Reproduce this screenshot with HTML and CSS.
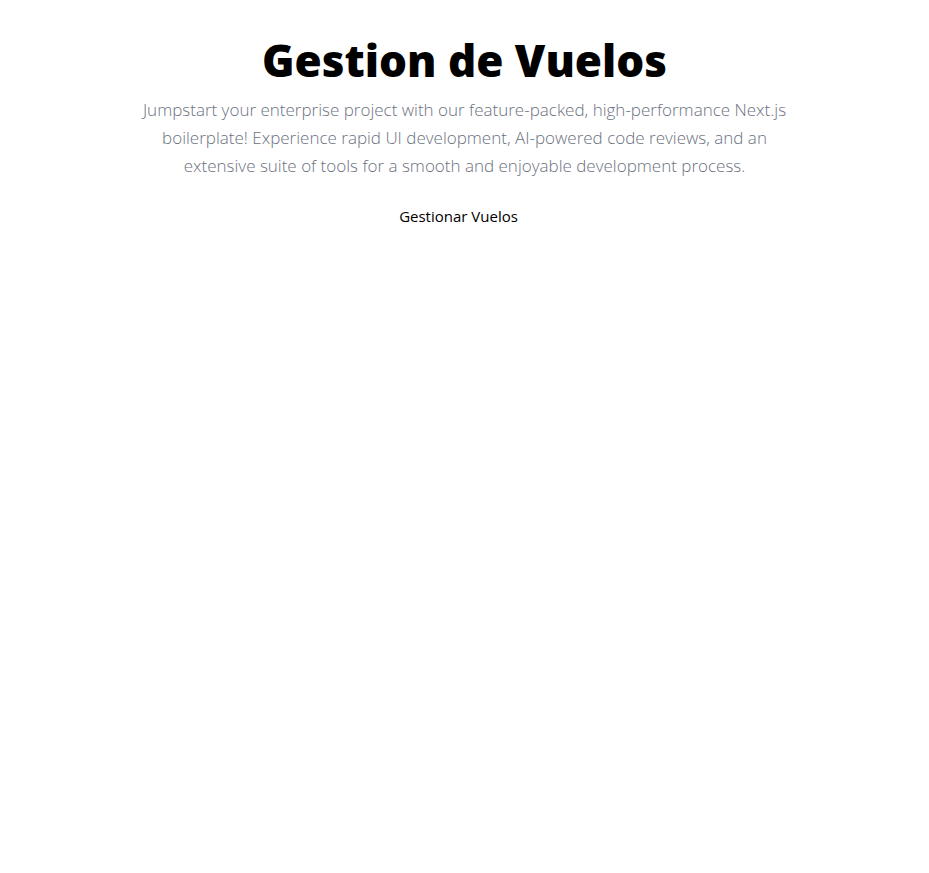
FILE: index.html
```html
<!DOCTYPE html>
<html lang="es">
<head>
<meta charset="utf-8">
<meta name="viewport" content="width=device-width, initial-scale=1">
<title>Gestion de Vuelos</title>
<link rel="stylesheet" href="styles.css">
</head>
<body>
<main class="hero">
<h1 class="hero-title">Gestion de Vuelos</h1>
<p class="hero-text">Jumpstart your enterprise project with our feature-packed, high-performance Next.js boilerplate! Experience rapid UI development, AI-powered code reviews, and an extensive suite of tools for a smooth and enjoyable development process.</p>
<a class="hero-link" href="#vuelos">Gestionar Vuelos</a>
</main>
</body>
</html>
```

FILE: styles.css
```css
body {
  margin: 0;
  background: #fff;
  color: #000;
  font-family: "Open Sans", "Noto Sans", sans-serif;
}

.hero {
  display: flex;
  flex-direction: column;
  align-items: center;
  padding: 36px 16px;
  text-align: center;
}

.hero-title {
  margin: 0 0 12px;
  font-size: 44px;
  font-weight: 800;
  line-height: 48px;
}

.hero-text {
  max-width: 672px;
  margin: 0 0 24px;
  color: #6b7280;
  font-size: 17px;
  font-weight: 300;
  line-height: 28px;
}

.hero-link {
  margin-right: 12px;
  color: inherit;
  font-size: 15px;
  line-height: 24px;
  text-decoration: none;
}
```
